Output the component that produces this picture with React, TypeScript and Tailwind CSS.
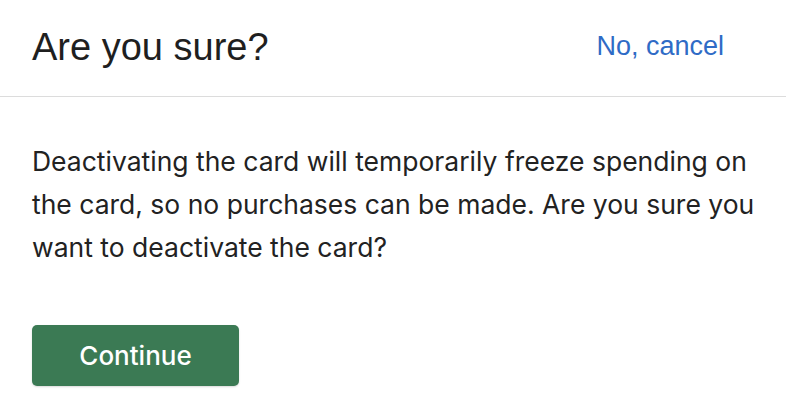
export default function App() {
  return (
    <div className="w-[786px] h-[414px] bg-white overflow-hidden">
      <header className="h-[97px] flex items-center justify-between pl-8 pr-[62px] border-b border-[#dcdcdc]">
        <h1 className="text-[38px] leading-none text-[#1f1f1f] font-['Liberation_Sans',Arial,sans-serif] -mt-[2px]">
          Are you sure?
        </h1>
        <button className="text-[27px] leading-none text-[#2f6bc6] font-['Liberation_Sans',Arial,sans-serif] -mt-[4px]">
          No, cancel
        </button>
      </header>
      <main className="pl-8 pr-5 pt-[43px]">
        <p className="text-[26.5px] leading-[43px] text-[#222222] font-['Inter',sans-serif]">
          Deactivating the card will temporarily freeze spending on the card, so no purchases can be made. Are you sure you want to deactivate the card?
        </p>
        <button className="mt-[56px] w-[207px] h-[61px] rounded-[5px] bg-[#3b7a54] text-white text-[26px] font-['Inter',sans-serif] font-medium shadow-[0_1px_2px_rgba(0,0,0,0.15)]">
          Continue
        </button>
      </main>
    </div>
  );
}
